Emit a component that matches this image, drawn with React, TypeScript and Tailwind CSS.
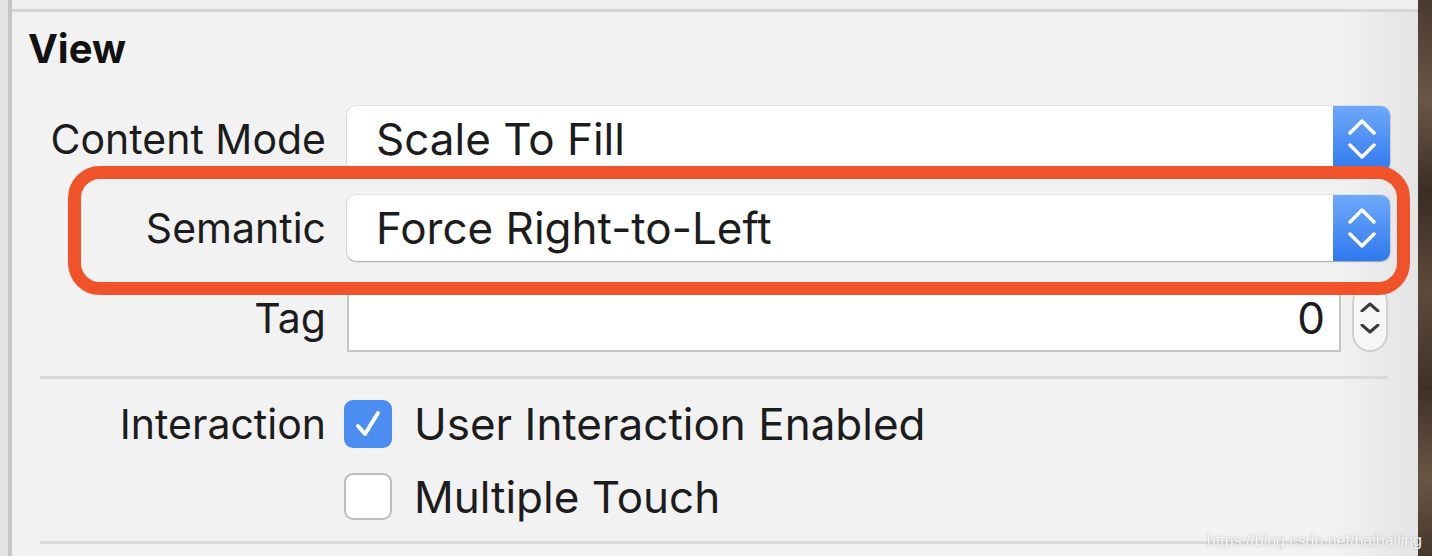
import React from "react";

function PopupChevrons() {
  return (
    <svg width="28" height="42" viewBox="0 0 28 42" fill="none">
      <path d="M2 15 L14 3 L26 15" stroke="white" strokeWidth="3.5" strokeLinecap="round" strokeLinejoin="round" />
      <path d="M2 27 L14 39 L26 27" stroke="white" strokeWidth="3.5" strokeLinecap="round" strokeLinejoin="round" />
    </svg>
  );
}

function Popup({ value }: { value: string }) {
  return (
    <div className="flex h-[66px] w-[1043px] rounded-[9px] bg-white shadow-[0_1px_1.5px_rgba(0,0,0,0.28),0_0_0_1px_rgba(0,0,0,0.06)]">
      <div className="flex flex-1 items-center pl-[29px] text-[44px] leading-none text-[#1c1c1c]">{value}</div>
      <div className="flex w-[57px] items-center justify-center rounded-r-[9px] bg-gradient-to-b from-[#6ea8f9] to-[#2f78ef]">
        <PopupChevrons />
      </div>
    </div>
  );
}

function Label({ children }: { children?: React.ReactNode }) {
  return <div className="w-[314px] shrink-0 text-right text-[41px] leading-none text-[#1c1c1c]">{children}</div>;
}

export default function App() {
  return (
    <div className="relative flex h-[556px] w-[1432px] overflow-hidden font-['Inter','Noto_Sans',sans-serif]">
      <div className="w-[8px] bg-[#e3e3e6]" />
      <div className="w-[4px] bg-[#c6c6c8]" />
      <div className="flex flex-1 flex-col bg-gradient-to-r from-[#f2f2f2] from-[94%] to-[#e4e4e4]">
        <div className="h-[9px] shrink-0 bg-[#f0f0f0]" />
        <div className="h-[3px] shrink-0 bg-[#d5d5d5]" />
        <div className="pl-[16px] pt-[17px] text-[40px] font-bold leading-[40px] text-[#111]">View</div>

        <div className="mt-[37px] flex h-[66px] shrink-0 items-center">
          <Label>Content Mode</Label>
          <div className="ml-[21px]">
            <Popup value="Scale To Fill" />
          </div>
        </div>

        <div className="mt-[23px] flex h-[66px] shrink-0 items-center">
          <Label>Semantic</Label>
          <div className="ml-[21px]">
            <Popup value="Force Right-to-Left" />
          </div>
        </div>

        <div className="mt-[23px] flex h-[68px] shrink-0 items-center">
          <Label>Tag</Label>
          <div className="ml-[21px] flex items-center">
            <div className="flex h-[68px] w-[994px] items-center justify-end border-2 border-[#c4c4c4] bg-white pr-[14px] text-[44px] leading-none text-[#1c1c1c]">
              0
            </div>
            <div className="ml-[11px] flex h-[68px] w-[36px] flex-col items-center justify-center gap-[12px] rounded-full border-2 border-[#cfcfcf] bg-[#f6f6f6]">
              <svg width="20" height="10" viewBox="0 0 20 10" fill="none">
                <path d="M2 9 L10 2 L18 9" stroke="#3a3a3a" strokeWidth="3" strokeLinecap="round" strokeLinejoin="round" />
              </svg>
              <svg width="20" height="10" viewBox="0 0 20 10" fill="none">
                <path d="M2 1 L10 8 L18 1" stroke="#3a3a3a" strokeWidth="3" strokeLinecap="round" strokeLinejoin="round" />
              </svg>
            </div>
          </div>
        </div>

        <div className="ml-[28px] mt-[24px] h-[3px] w-[1348px] shrink-0 bg-[#d8d8d8]" />

        <div className="mt-[21px] flex h-[48px] shrink-0 items-center">
          <Label>Interaction</Label>
          <div className="ml-[18px] flex h-[48px] w-[48px] items-center justify-center rounded-[9px] bg-[#4c8df2]">
            <svg width="32" height="32" viewBox="0 0 32 32" fill="none">
              <path d="M6 18 L13 26 L26 5" stroke="white" strokeWidth="4" strokeLinecap="round" strokeLinejoin="round" />
            </svg>
          </div>
          <div className="ml-[22px] text-[44px] leading-none text-[#1c1c1c]">User Interaction Enabled</div>
        </div>

        <div className="mt-[25px] flex h-[47px] shrink-0 items-center">
          <Label />
          <div className="ml-[18px] h-[47px] w-[48px] rounded-[9px] border-2 border-[#bdbdbd] bg-white" />
          <div className="ml-[22px] text-[44px] leading-none text-[#1c1c1c]">Multiple Touch</div>
        </div>

        <div className="ml-[28px] mt-[21px] h-[3px] w-[1348px] shrink-0 bg-[#dadada]" />
      </div>
      <div className="w-[14px] bg-[linear-gradient(180deg,#4a3a2e_0%,#6b5646_18%,#3a2d24_35%,#5e4a3b_52%,#3f3127_70%,#6a5544_86%,#45372c_100%)]" />

      <div className="pointer-events-none absolute left-[68px] top-[166px] h-[129px] w-[1342px] rounded-[32px] border-[13px] border-[#f0532a]" />

      <div className="pointer-events-none absolute right-[10px] top-[529px] font-['Liberation_Sans',sans-serif] text-[16px] text-[#f8f8f8] [text-shadow:0_0_2px_rgba(0,0,0,0.3)]">
        https://blog.csdn.net/baihailing
      </div>
    </div>
  );
}
